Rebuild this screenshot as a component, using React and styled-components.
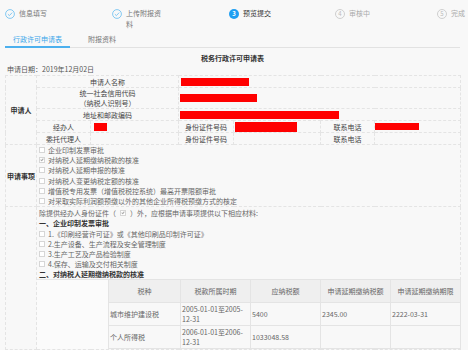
import styled, { createGlobalStyle } from "styled-components";

const GlobalStyle = createGlobalStyle`
  html, body {
    margin: 0;
    padding: 0;
    background: #f8f8f8;
    overflow: hidden;
  }
  body {
    font-family: "Noto Sans CJK SC", "Noto Sans", sans-serif;
    font-size: 7px;
    color: #666;
  }
`;

const steps = [
  { title: "信息填写", state: "done", w: 107 },
  { title: "上传附报资料", state: "done", w: 117 },
  { title: "预览提交", state: "active", n: 3, w: 106 },
  { title: "审核中", state: "wait", n: 4, w: 102 },
  { title: "完成", state: "wait", n: 5, w: 30 },
];

const items = [
  { text: "企业印制发票审批" },
  { text: "对纳税人延期缴纳税款的核准", checked: true },
  { text: "对纳税人延期申报的核准" },
  { text: "对纳税人变更纳税定额的核准" },
  { text: "增值税专用发票（增值税税控系统）最高开票限额审批" },
  { text: "对采取实际利润额预缴以外的其他企业所得税预缴方式的核定" },
];

const materials = [
  "1.《印刷经营许可证》或《其他印刷品印制许可证》",
  "2.生产设备、生产流程及安全管理制度",
  "3.生产工艺及产品检验制度",
  "4.保存、运输及交付相关制度",
];

const App = () => {
  return (
    <>
      <GlobalStyle />
      <Page>
        <Steps>
          {steps.map((s) => (
            <Step key={s.title} $w={s.w}>
              {s.state === "done" ? (
                <CheckIcon viewBox="0 0 10 10">
                  <circle cx="5" cy="5" r="4.4" fill="none" stroke="#66bdf0" strokeWidth="0.8" />
                  <path d="M2.9 5.2 L4.4 6.6 L7.2 3.6" fill="none" stroke="#66bdf0" strokeWidth="0.8" />
                </CheckIcon>
              ) : (
                <NumIcon $active={s.state === "active"}>{s.n}</NumIcon>
              )}
              <StepTitle $state={s.state}>{s.title}</StepTitle>
            </Step>
          ))}
        </Steps>

        <Tabs>
          <Tab $active>行政许可申请表</Tab>
          <Tab>附报资料</Tab>
        </Tabs>

        <Title>税务行政许可申请表</Title>
        <DateLine>申请日期：2019年12月02日</DateLine>

        <Form>
          <colgroup>
            <col style={{ width: 31 }} />
            <col style={{ width: 54 }} />
            <col style={{ width: 88 }} />
            <col style={{ width: 55 }} />
            <col style={{ width: 87 }} />
            <col style={{ width: 54 }} />
            <col style={{ width: 86 }} />
          </colgroup>
          <tbody>
            <tr style={{ height: 12 }}>
              <Head rowSpan={5}>申请人</Head>
              <Label colSpan={2}>申请人名称</Label>
              <Value colSpan={4} $pad={2}>
                <Redact $w={68} $h={8} />
              </Value>
            </tr>
            <tr style={{ height: 21 }}>
              <Label colSpan={2}>
                统一社会信用代码
                <br />
                （纳税人识别号）
              </Label>
              <Value colSpan={4} $pad={1}>
                <Redact $w={77} $h={8} />
              </Value>
            </tr>
            <tr style={{ height: 12 }}>
              <Label colSpan={2}>地址和邮政编码</Label>
              <Value colSpan={4} $pad={1}>
                <Redact $w={159} $h={8} />
              </Value>
            </tr>
            <tr style={{ height: 12 }}>
              <Label>经办人</Label>
              <Value $pad={3}>
                <Redact $w={13} $h={8} />
              </Value>
              <Label>身份证件号码</Label>
              <Value $pad={1}>
                <Redact $w={62} $h={10} />
              </Value>
              <Label>联系电话</Label>
              <Value $pad={0}>
                <Redact $w={44} $h={7} />
              </Value>
            </tr>
            <tr style={{ height: 12 }}>
              <Label>委托代理人</Label>
              <Value />
              <Label>身份证件号码</Label>
              <Value />
              <Label>联系电话</Label>
              <Value />
            </tr>
            <tr style={{ height: 62 }}>
              <Head>申请事项</Head>
              <ListCell colSpan={6}>
                {items.map((it) => (
                  <Item key={it.text}>
                    <Box $checked={it.checked}>
                      {it.checked && <Tick />}
                    </Box>
                    {it.text}
                  </Item>
                ))}
              </ListCell>
            </tr>
            <tr>
              <Head />
              <ListCell colSpan={6} $top={1}>
                <Item>
                  除提供经办人身份证件（<InlineBox><Tick /></InlineBox>）外，应根据申请事项提供以下相应材料:
                </Item>
                <Section>一、企业印制发票审批</Section>
                {materials.map((m) => (
                  <Item key={m}>
                    <Box />
                    {m}
                  </Item>
                ))}
                <Section>二、对纳税人延期缴纳税款的核准</Section>
                <Nested>
                  <Spacer />
                  <TaxTable>
                    <colgroup>
                      <col style={{ width: 72 }} />
                      <col style={{ width: 70 }} />
                      <col style={{ width: 70 }} />
                      <col style={{ width: 70 }} />
                      <col style={{ width: 70 }} />
                    </colgroup>
                    <thead>
                      <tr>
                        <TaxHead>税种</TaxHead>
                        <TaxHead>税款所属时期</TaxHead>
                        <TaxHead>应纳税额</TaxHead>
                        <TaxHead>申请延期缴纳税额</TaxHead>
                        <TaxHead>申请延期缴纳期限</TaxHead>
                      </tr>
                    </thead>
                    <tbody>
                      <tr>
                        <TaxCell>城市维护建设税</TaxCell>
                        <TaxCell>2005-01-01至2005-<wbr />12-31</TaxCell>
                        <TaxCell>5400</TaxCell>
                        <TaxCell>2345.00</TaxCell>
                        <TaxCell>2222-03-31</TaxCell>
                      </tr>
                      <tr>
                        <TaxCell>个人所得税</TaxCell>
                        <TaxCell>2006-01-01至2006-<wbr />12-31</TaxCell>
                        <TaxCell>1033048.58</TaxCell>
                        <TaxCell />
                        <TaxCell />
                      </tr>
                    </tbody>
                  </TaxTable>
                </Nested>
              </ListCell>
            </tr>
          </tbody>
        </Form>
      </Page>
    </>
  );
};
export default App;

const Page = styled.div`
  width: 455px;
  padding-left: 5px;
`;
const Steps = styled.div`
  display: flex;
  padding-top: 8px;
  height: 22px;
`;
const Step = styled.div`
  display: flex;
  align-items: flex-start;
  gap: 4px;
  width: ${(p) => p.$w}px;
  flex: none;
`;
const CheckIcon = styled.svg`
  width: 10px;
  height: 10px;
  flex: none;
  margin-top: 0.5px;
`;
const NumIcon = styled.span`
  width: ${(p) => (p.$active ? 10 : 8)}px;
  height: ${(p) => (p.$active ? 10 : 8)}px;
  flex: none;
  margin-top: ${(p) => (p.$active ? 0.5 : 1)}px;
  border-radius: 50%;
  background: ${(p) => (p.$active ? "#1e9ef2" : "transparent")};
  border: ${(p) => (p.$active ? "none" : "1px solid #cfcfcf")};
  color: ${(p) => (p.$active ? "#fff" : "#bbb")};
  font-size: 6px;
  font-weight: ${(p) => (p.$active ? "bold" : "normal")};
  line-height: ${(p) => (p.$active ? 10 : 8)}px;
  text-align: center;
`;
const StepTitle = styled.div`
  width: ${(p) => (p.$state === "done" ? "36px" : "auto")};
  line-height: 11px;
  color: ${(p) =>
    p.$state === "active" ? "#333" : p.$state === "done" ? "#777" : "#aaa"};
`;
const Tabs = styled.div`
  display: flex;
  gap: 10px;
  border-bottom: 1px solid #e2e2e2;
`;
const Tab = styled.div`
  padding: 4px 8px 2px;
  line-height: 10px;
  margin-bottom: -1px;
  color: ${(p) => (p.$active ? "#3aa6ea" : "#777")};
  border-bottom: 2px solid ${(p) => (p.$active ? "#4cb0ee" : "transparent")};
`;
const Title = styled.div`
  margin-top: 5px;
  line-height: 10px;
  text-align: center;
  color: #333;
  font-weight: bold;
`;
const DateLine = styled.div`
  margin-top: 1px;
  padding-left: 2px;
  line-height: 10px;
  color: #555;
`;
const Form = styled.table`
  margin-top: 1px;
  width: 455px;
  table-layout: fixed;
  border-collapse: collapse;
  & > tbody > tr > td {
    border: 1px dashed #e4e4e4;
    padding: 0;
    line-height: 10px;
    vertical-align: middle;
  }
`;
const Head = styled.td`
  text-align: center;
  color: #333;
  font-weight: bold;
`;
const Label = styled.td`
  text-align: center;
  color: #444;
`;
const Value = styled.td`
  padding-left: ${(p) => p.$pad || 0}px !important;
`;
const Redact = styled.span`
  display: block;
  width: ${(p) => p.$w}px;
  height: ${(p) => p.$h}px;
  background: #ff0000;
`;
const ListCell = styled.td`
  text-align: left;
  vertical-align: top !important;
  padding-top: ${(p) => p.$top || 0}px !important;
`;
const Item = styled.div`
  display: flex;
  align-items: center;
  gap: 3px;
  padding-left: 2px;
  height: 10.2px;
  line-height: 10px;
  color: #666;
  white-space: nowrap;
`;
const Box = styled.span`
  position: relative;
  width: 4px;
  height: 4px;
  flex: none;
  border: 1px solid #d6d6d6;
  background: #fff;
`;
const InlineBox = styled(Box)`
  display: inline-block;
  margin: 0 1px;
`;
const Tick = styled.span`
  position: absolute;
  left: 1px;
  top: 0;
  width: 1px;
  height: 2px;
  border-right: 1px solid #aaa;
  border-bottom: 1px solid #aaa;
  transform: rotate(40deg);
`;
const Section = styled.div`
  padding-left: 2px;
  height: 10.2px;
  line-height: 10px;
  color: #333;
  font-weight: bold;
`;
const Nested = styled.div`
  display: flex;
  margin-top: 0;
`;
const Spacer = styled.div`
  width: 71px;
  flex: none;
  border-top: 1px solid #e6e6e6;
  background: #fbfbfb;
`;
const TaxTable = styled.table`
  width: 352px;
  table-layout: fixed;
  border-collapse: collapse;
`;
const TaxHead = styled.th`
  height: 22px;
  border: 1px solid #e4e4e4;
  background: #efefef;
  font-weight: normal;
  text-align: center;
  color: #666;
  line-height: 10px;
  padding: 0;
`;
const TaxCell = styled.td`
  height: 22px;
  border: 1px solid #e4e4e4;
  padding: 0 0 0 1px;
  text-align: left;
  vertical-align: middle;
  line-height: 10px;
  color: #666;
`;
